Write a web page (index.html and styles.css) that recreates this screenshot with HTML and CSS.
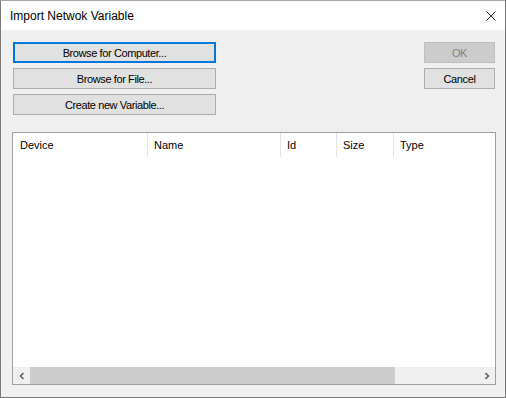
FILE: index.html
```html
<!DOCTYPE html>
<html lang="en">
<head>
  <meta charset="UTF-8">
  <title>Import Netwok Variable</title>
  <link rel="stylesheet" href="styles.css">
</head>
<body>
  <div class="window">
    <div class="titlebar">
      <span class="title">Import Netwok Variable</span>
      <svg class="close" width="10" height="10" viewBox="0 0 10 10">
        <path d="M0.5 0.5 L9.5 9.5 M9.5 0.5 L0.5 9.5" stroke="#222" stroke-width="1" fill="none"/>
      </svg>
    </div>

    <div class="content">
      <!-- Action buttons -->
      <div class="top-row">
        <div class="button-col left">
          <button class="btn default">Browse for Computer...</button>
          <button class="btn">Browse for File...</button>
          <button class="btn">Create new Variable...</button>
        </div>
        <div class="button-col right">
          <button class="btn disabled">OK</button>
          <button class="btn">Cancel</button>
        </div>
      </div>

      <!-- Variable list -->
      <div class="listview">
        <div class="list-header">
          <div class="col col-device">Device</div>
          <div class="col col-name">Name</div>
          <div class="col col-id">Id</div>
          <div class="col col-size">Size</div>
          <div class="col col-type">Type</div>
        </div>
        <div class="list-body"></div>
        <div class="hscroll">
          <div class="arrow">
            <svg width="8" height="8" viewBox="0 0 8 8"><path d="M5.5 1 L2.5 4 L5.5 7" stroke="#606060" stroke-width="1.6" fill="none"/></svg>
          </div>
          <div class="track">
            <div class="thumb"></div>
          </div>
          <div class="arrow">
            <svg width="8" height="8" viewBox="0 0 8 8"><path d="M2.5 1 L5.5 4 L2.5 7" stroke="#606060" stroke-width="1.6" fill="none"/></svg>
          </div>
        </div>
      </div>
    </div>
  </div>
</body>
</html>
```

FILE: styles.css
```css
html, body {
  margin: 0;
  padding: 0;
  background-color: #f0f0f0;
}
body {
  font-family: "Liberation Sans", Arial, sans-serif;
  color: #000;
}
.window {
  width: 506px;
  height: 398px;
  box-sizing: border-box;
  border: 1px solid #7a7a7a;
  border-top-color: #a8a8a8;
  background-color: #f0f0f0;
  display: flex;
  flex-direction: column;
}
.titlebar {
  height: 29px;
  background-color: #ffffff;
  display: flex;
  align-items: center;
  justify-content: space-between;
  padding: 0 9px 0 9px;
}
.title {
  font-size: 12px;
  color: #000;
  margin-top: 1px;
}
.close {
  margin-top: 1px;
}
.content {
  flex: 1;
  display: flex;
  flex-direction: column;
  padding: 12px 9px 12px 11px;
}
.top-row {
  display: flex;
  justify-content: space-between;
  margin-bottom: 17px;
}
.button-col {
  display: flex;
  flex-direction: column;
  gap: 5px;
}
.button-col.left {
  width: 203px;
  margin-left: 1px;
}
.button-col.right {
  width: 71px;
  margin-right: 1px;
}
.btn {
  height: 21px;
  padding: 0;
  font-family: "Liberation Sans", Arial, sans-serif;
  font-size: 11px;
  letter-spacing: -0.4px;
  color: #000;
  background-color: #e1e1e1;
  border: 1px solid #adadad;
  border-radius: 0;
}
.btn.default {
  border-color: #0078d7;
  box-shadow: inset 0 0 0 1px #0078d7;
}
.btn.disabled {
  background-color: #cccccc;
  border-color: #bfbfbf;
  color: #838383;
}
.listview {
  flex: 1;
  display: flex;
  flex-direction: column;
  background-color: #ffffff;
  border: 1px solid #a0a0a0;
}
.list-header {
  display: flex;
  height: 24px;
  font-size: 11px;
}
.col {
  box-sizing: border-box;
  padding-left: 6px;
  line-height: 24px;
  border-right: 1px solid #e5e5e5;
}
.col-device { width: 135px; padding-left: 7px; }
.col-name { width: 133px; }
.col-id { width: 56px; }
.col-size { width: 57px; }
.col-type { flex: 1; border-right: none; }
.list-body {
  flex: 1;
}
.hscroll {
  display: flex;
  height: 17px;
  background-color: #f0f0f0;
}
.arrow {
  width: 17px;
  display: flex;
  align-items: center;
  justify-content: center;
}
.track {
  flex: 1;
}
.thumb {
  width: 365px;
  height: 100%;
  background-color: #cdcdcd;
}
```
